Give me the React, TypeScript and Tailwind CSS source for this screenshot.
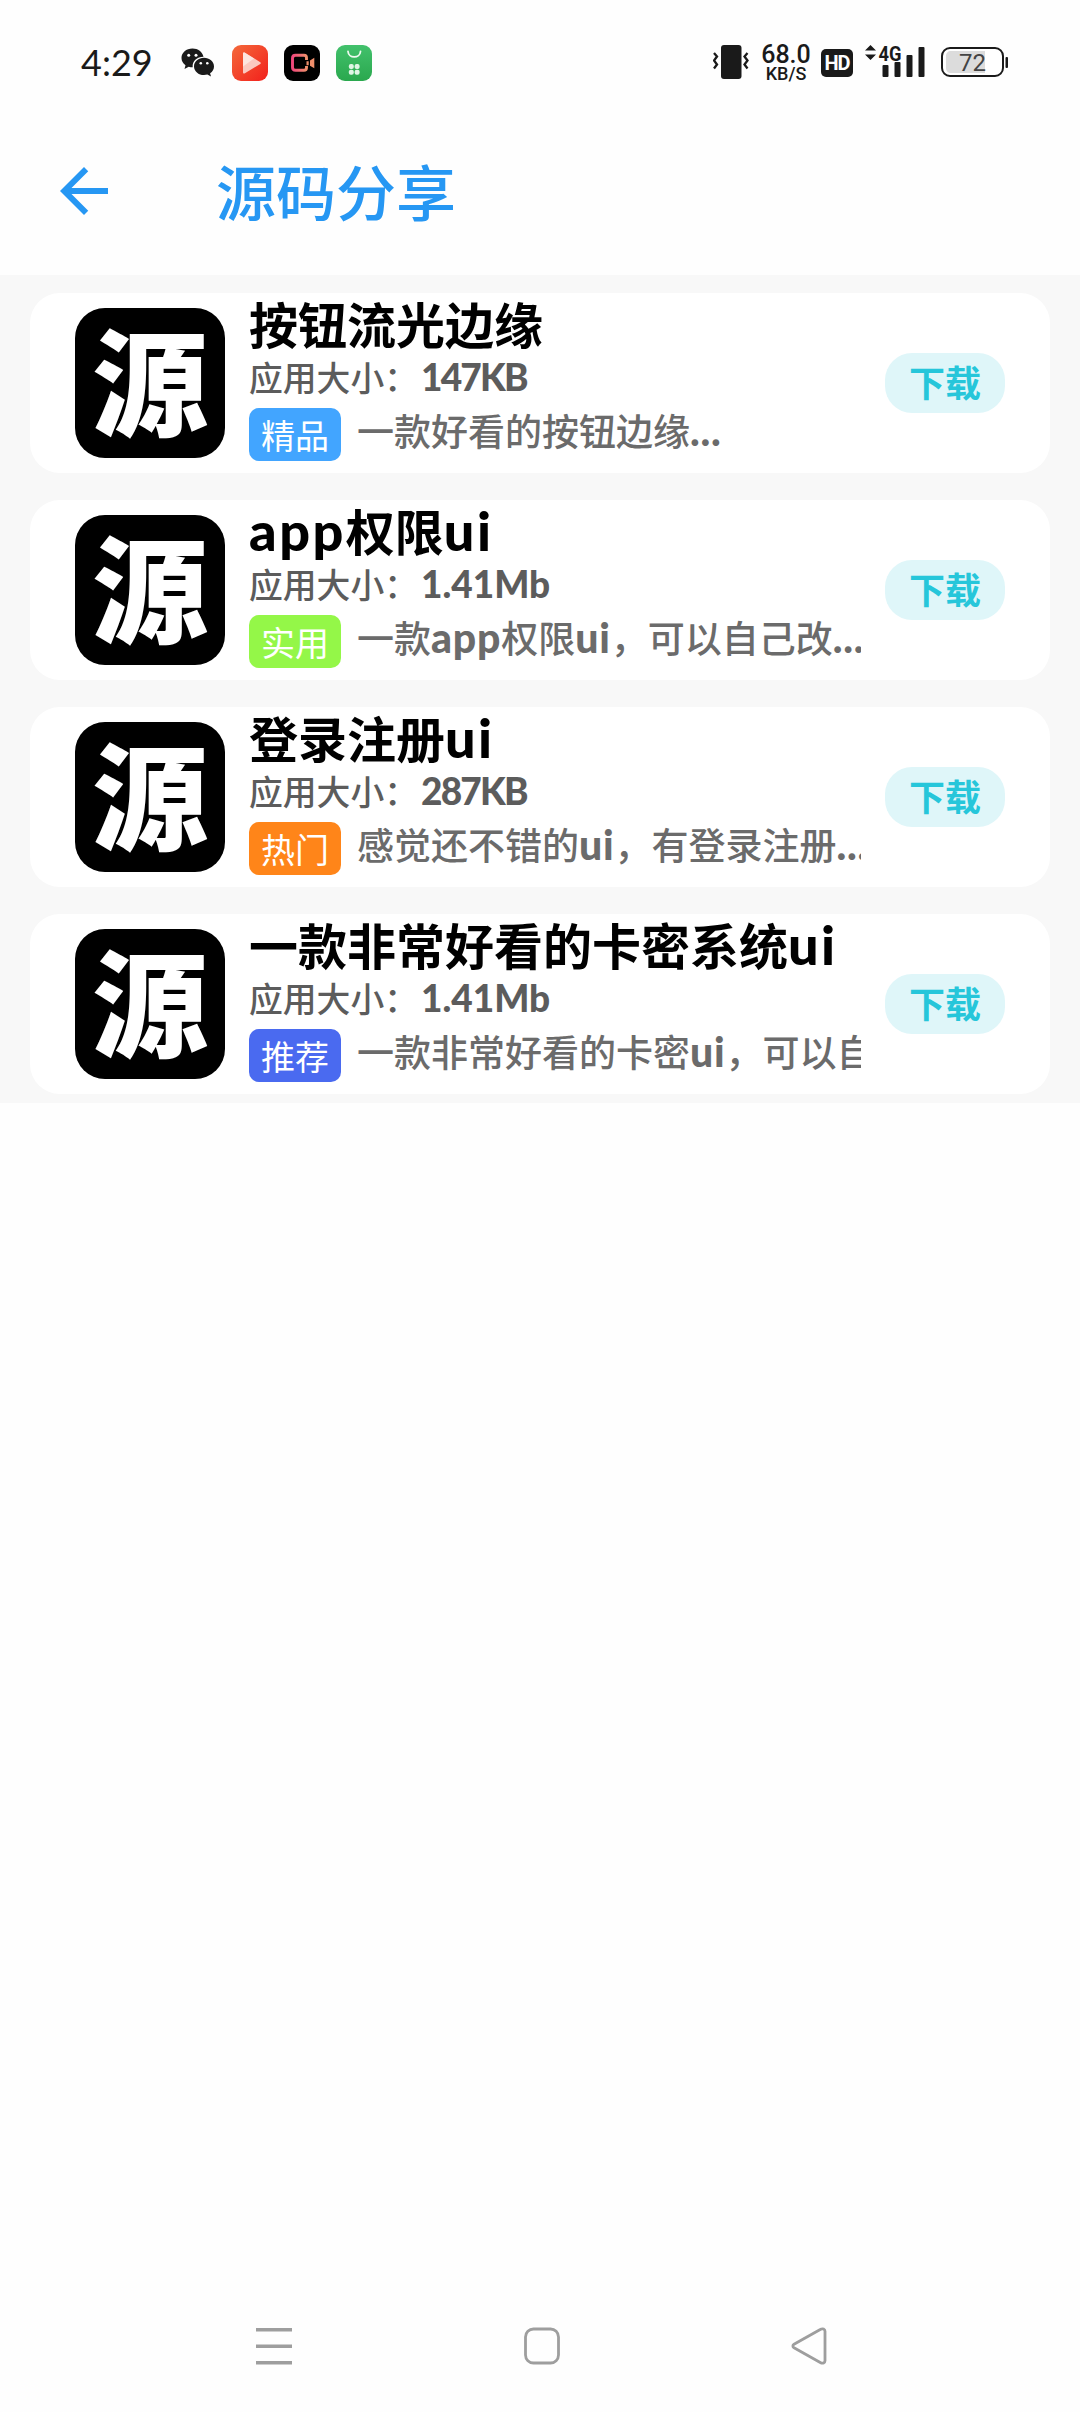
type AppItem = {
  id: number;
  name: string;
  size: string;
  tag: string;
  tagClass: string;
  desc: string;
};

const items: AppItem[] = [
  { id: 1, name: "按钮流光边缘", size: "147KB", tag: "精品", tagClass: "bg-[#42a5ff]", desc: "一款好看的按钮边缘..." },
  { id: 2, name: "app权限ui", size: "1.41Mb", tag: "实用", tagClass: "bg-[#94f748]", desc: "一款app权限ui，可以自己改..." },
  { id: 3, name: "登录注册ui", size: "287KB", tag: "热门", tagClass: "bg-[#ff8519]", desc: "感觉还不错的ui，有登录注册..." },
  { id: 4, name: "一款非常好看的卡密系统ui", size: "1.41Mb", tag: "推荐", tagClass: "bg-[#4a6af0]", desc: "一款非常好看的卡密ui，可以自己改" },
];

// Latin runs use a heavier face than the Chinese text around them
function MixedText({ text, latinClass }: { text: string; latinClass: string }) {
  const parts = text.split(/([A-Za-z0-9.]+)/).filter(Boolean);

  return (
    <>
      {parts.map((part, index) =>
        /^[A-Za-z0-9.]/.test(part) ? (
          <span key={index} className={latinClass}>
            {part}
          </span>
        ) : (
          <span key={index}>{part}</span>
        ),
      )}
    </>
  );
}

function StatusBar() {
  return (
    <div className="flex h-[125px] items-start justify-between pt-[43px] pr-[72px] pl-[81px] text-[#1a1a1a]">
      <div className="flex h-10 items-center">
        <span className="mb-[3px] w-[72px] font-['Lato',sans-serif] text-[36px] leading-[38px]">4:29</span>
        <svg className="ml-7 h-[30px] w-[34px]" viewBox="0 0 34 30" fill="currentColor">
          <path d="M11.5 0.5C5.2 0.5 0.5 4.7 0.5 10c0 3 1.500 5.500 4 7.300L3.500 21l4.200-2.300c1.300.4 2.500.5 4 .5C11 13 16 8.700 22.500 8.700 21.500 4 17 .5 11.500.5Z" />
          <path d="M23 9.800c-5.500 0-10 3.800-10 8.600s4.500 8.600 10 8.600c1.200 0 2.300-.2 3.400-.5l3.600 2-.9-3.300c2.500-1.600 3.900-4 3.900-6.800 0-4.800-4.500-8.600-10-8.600Z" />
          <circle cx="7.700" cy="7.200" r="1.500" fill="#fff" />
          <circle cx="15" cy="7.200" r="1.500" fill="#fff" />
          <circle cx="19.800" cy="15.300" r="1.300" fill="#fff" />
          <circle cx="26.300" cy="15.300" r="1.300" fill="#fff" />
        </svg>
        <svg className="ml-[17px] size-9" viewBox="0 0 36 36">
          <defs>
            <linearGradient id="play" x1="0" y1="0" x2="1" y2="1">
              <stop offset="0" stopColor="#f4693a" />
              <stop offset="1" stopColor="#f2201c" />
            </linearGradient>
          </defs>
          <rect width="36" height="36" rx="9" fill="url(#play)" />
          <path d="M11 8.500v19c0 .8.800 1.300 1.500.9L28.300 19c.7-.4.7-1.400 0-1.800L12.500 7.600c-.7-.4-1.500.1-1.500.9Z" fill="#fbc9c0" />
          <path d="M11 8.500v13L22 13.400 12.500 7.600c-.7-.4-1.500.1-1.500.9Z" fill="#fde5df" />
        </svg>
        <svg className="ml-4 size-9" viewBox="0 0 36 36">
          <defs>
            <linearGradient id="cam" x1="0" y1="0" x2="1" y2="0">
              <stop offset="0" stopColor="#f0487c" />
              <stop offset="1" stopColor="#f08f6c" />
            </linearGradient>
          </defs>
          <rect width="36" height="36" rx="9" fill="#000" />
          <path d="M22.500 15v-2.300c0-1.500-1-2.500-2.500-2.500h-8.500c-2 0-3 1-3 3v9c0 2 1 3 3 3H20c1.500 0 2.500-1 2.500-2.500V21" fill="none" stroke="url(#cam)" strokeWidth="2.900" />
          <path d="M22.500 16.300h2.200v4h-2.200zM26 15.500l4.300-2.700v10.500L26 20.700Z" fill="#f08f6c" />
        </svg>
        <svg className="ml-4 size-9" viewBox="0 0 36 36">
          <defs>
            <linearGradient id="shop" x1="0" y1="0" x2="0" y2="1">
              <stop offset="0" stopColor="#42c16c" />
              <stop offset="1" stopColor="#2aa84e" />
            </linearGradient>
          </defs>
          <rect width="36" height="36" rx="9" fill="url(#shop)" />
          <path d="M12 6.500c.5 7.200 12 7.200 12.500 0" fill="none" stroke="#effaf1" strokeWidth="1.800" strokeLinecap="round" />
          <g fill="#dff5e5">
            <rect x="12.800" y="19" width="5" height="5" rx="2" />
            <rect x="18.600" y="19" width="5" height="5" rx="2" />
            <rect x="12.800" y="24.700" width="5" height="5" rx="2" />
            <rect x="18.600" y="24.700" width="5" height="5" rx="2" />
          </g>
        </svg>
      </div>

      <div className="flex h-10 items-start pt-0.5">
        <svg className="h-[34px] w-9" viewBox="0 0 36 34">
          <rect x="8" width="20.500" height="34" rx="3" fill="currentColor" />
          <path d="m1 8 3 3.500-3 4 3 4-3 4M34.500 8l-3 3.500 3 4-3 4 3 4" fill="none" stroke="currentColor" strokeWidth="2.300" />
        </svg>
        <div className="ml-3 flex w-[50px] flex-col items-center font-['Roboto',sans-serif] font-medium">
          <span className="text-[25px] leading-[20px]">68.0</span>
          <span className="text-[18px] leading-[18px]">KB/S</span>
        </div>
        <div className="mt-1 ml-2.5 flex h-7 w-8 items-center justify-center rounded-[5px] bg-[#1a1a1a] font-['Roboto',sans-serif] text-[20px] font-bold tracking-[-1px] text-white">
          HD
        </div>
        <svg className="ml-3 h-[34px] w-[60px]" viewBox="0 0 60 34" fill="currentColor">
          <path d="m5.500 0 5.500 5.500H0ZM5.500 15 0 9.500h11Z" />
          <text x="13.500" y="15.500" fontSize="21" fontWeight="700" textLength="23" lengthAdjust="spacingAndGlyphs" className="font-['Roboto',sans-serif]">
            4G
          </text>
          <rect x="17.500" y="20" width="6" height="12" rx="1" />
          <rect x="29.500" y="17" width="6" height="15" rx="1" />
          <rect x="41.500" y="10" width="6" height="22" rx="1" />
          <rect x="53.500" y="2" width="6" height="30" rx="1" />
        </svg>
        <svg className="ml-4 h-8 w-[67px]" viewBox="0 0 67 32">
          <rect x="1" y="3" width="61" height="28" rx="8" fill="#fff" stroke="currentColor" strokeWidth="2" />
          <path d="M10 6h34v22H10c-3 0-5-2-5-5V11c0-3 2-5 5-5Z" fill="#dcdcdc" />
          <rect x="64.500" y="12" width="2.500" height="11" rx="1" fill="currentColor" />
          <text x="18" y="25.500" fontSize="24" fill="#444" className="font-['Roboto',sans-serif]">
            72
          </text>
        </svg>
      </div>
    </div>
  );
}

function Header() {
  return (
    <header className="flex h-[150px] items-start text-[#2697f3]">
      <svg className="mt-[30px] ml-12 size-[72px]" viewBox="0 0 24 24" fill="currentColor">
        <path d="M20 11H7.830l5.590-5.590L12 4l-8 8 8 8 1.410-1.410L7.830 13H20v-2z" />
      </svg>
      <h1 className="mt-[23px] ml-[96px] text-[60px] leading-[84px] font-medium">源码分享</h1>
    </header>
  );
}

function AppCard({ item }: { item: AppItem }) {
  return (
    <li className="mx-[30px] mt-[18px] mb-[9px] flex h-[180px] rounded-[30px] bg-white">
      <div className="mt-[15px] ml-[45px] flex size-[150px] shrink-0 justify-center rounded-[30px] bg-black">
        <span className="text-[116px] leading-[136px] font-black text-white">源</span>
      </div>

      <div className="ml-6 w-[612px] shrink-0 whitespace-nowrap">
        <p className="h-[62px] text-[49px] leading-[60px] font-bold text-black">
          <MixedText text={item.name} latinClass="font-['Lato',sans-serif] text-[54px] font-black tracking-[2.5px]" />
        </p>
        <p className="h-[53px] text-[33.800px] leading-[44px] font-medium text-[#5c5c5c]">
          应用大小：
          <span className={`ml-[3px] font-['Lato',sans-serif] text-[37px] font-black ${item.size.endsWith("KB") ? "tracking-[-1.800px]" : ""}`}>{item.size}</span>
        </p>
        <div className="flex">
          <span className={`flex h-[53px] w-[92px] shrink-0 items-center justify-center rounded-[10px] text-[34px] text-white ${item.tagClass}`}>{item.tag}</span>
          <p className="ml-4 h-[53px] min-w-0 overflow-x-clip text-[37px] leading-[45px] font-medium text-[#6b6b6b]">
            <MixedText text={item.desc} latinClass="font-['Lato',sans-serif] text-[41px] font-black tracking-[0.8px]" />
          </p>
        </div>
      </div>

      <button className="mt-[60px] ml-6 flex h-[60px] w-[120px] justify-center rounded-[27px] bg-[#dff6f9] text-[36px] leading-[56px] font-bold text-[#26c6da]">下载</button>
    </li>
  );
}

function NavBar() {
  return (
    <nav className="flex h-[112px] items-start pt-6 text-[#9e9e9e]">
      <svg className="ml-[256px] h-11 w-9" viewBox="0 0 36 44" fill="currentColor">
        <path d="M0 4h36v3.500H0zM0 20.500h36V24H0zM0 37h36v3.500H0z" />
      </svg>
      <svg className="ml-[232px] h-11 w-9" viewBox="0 0 36 44" fill="none" stroke="currentColor" strokeWidth="2.800">
        <rect x="1.500" y="5" width="33" height="34" rx="8" />
      </svg>
      <svg className="ml-[231px] h-11 w-9" viewBox="0 0 36 44" fill="none" stroke="currentColor" strokeWidth="2.800" strokeLinejoin="round">
        <path d="M3 20.200 29.700 5.300c2-1.200 4.300 0 4.300 2v29.400c0 2-2.300 3.200-4.300 2L3 23.800c-1.500-.9-1.500-2.700 0-3.600Z" />
      </svg>
    </nav>
  );
}

export default function App() {
  return (
    <div lang="zh-CN" className="flex h-[2412px] w-[1080px] flex-col bg-[#fefefe] font-['Noto_Sans_CJK_SC',sans-serif]">
      <StatusBar />
      <Header />
      <ul className="flex flex-col bg-[#f8f8f8]">
        {items.map((item) => (
          <AppCard key={item.id} item={item} />
        ))}
      </ul>
      <div className="grow" />
      <NavBar />
    </div>
  );
}
